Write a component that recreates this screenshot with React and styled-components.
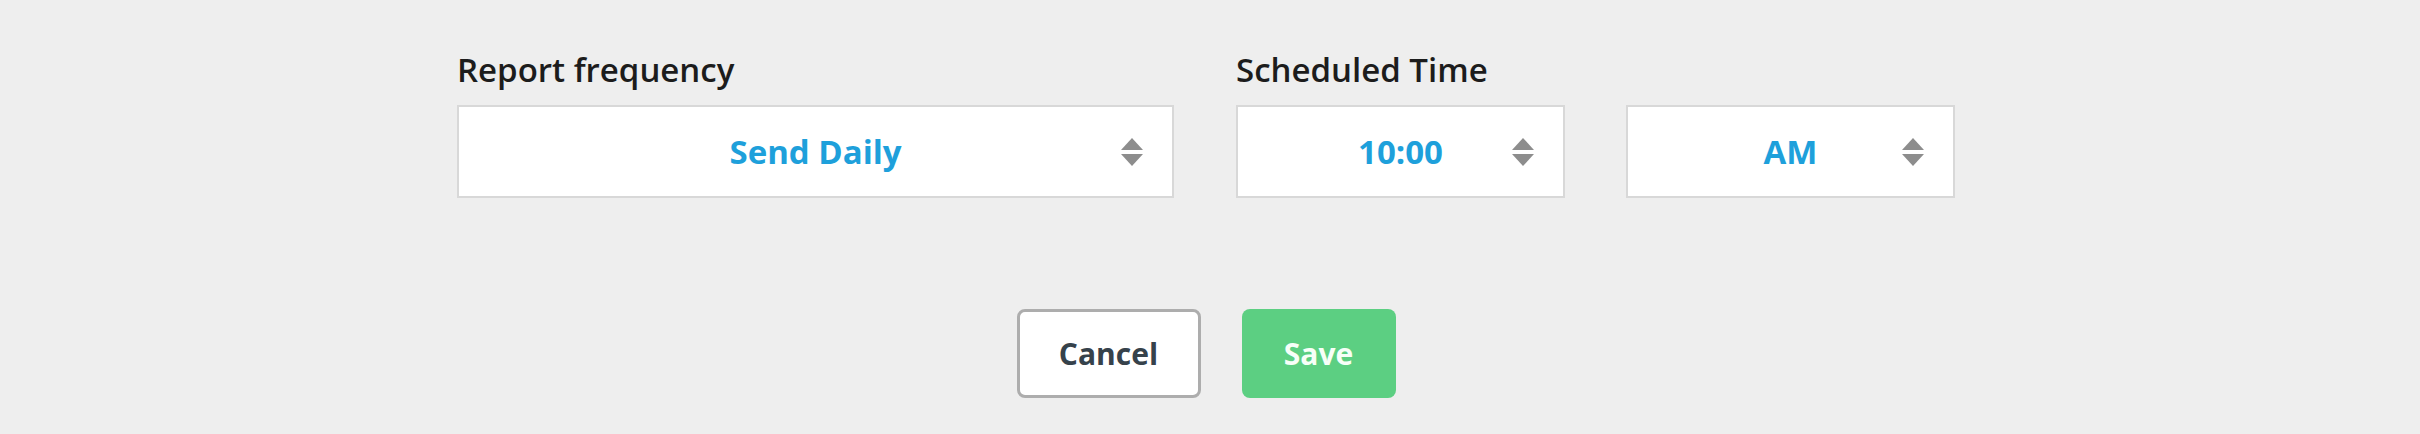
import styled, { createGlobalStyle } from 'styled-components';

const GlobalStyle = createGlobalStyle`
  html, body {
    margin: 0;
    padding: 0;
    background: #eeeeee;
    font-family: "Open Sans", Lato, "Liberation Sans", sans-serif;
  }
`;

const Page = styled.div`
  display: flex;
  justify-content: center;
  padding: 52px 8px 0 0;
  height: 434px;
  box-sizing: border-box;
`;

const Form = styled.div`
  width: 1498px;
  display: flex;
  flex-direction: column;
`;

const FieldsRow = styled.div`
  display: flex;
  gap: 62px;
`;

const Field = styled.div`
  display: flex;
  flex-direction: column;
`;

const Label = styled.div`
  font-size: 33px;
  line-height: 36px;
  font-weight: 600;
  color: #1c1c1c;
  margin-bottom: 17px;
`;

const Controls = styled.div`
  display: flex;
  gap: 61px;
`;

const Select = styled.div`
  width: ${({ $width }) => $width}px;
  height: 93px;
  box-sizing: border-box;
  background: #fff;
  border: 2px solid #d8d8d8;
  display: grid;
  grid-template-columns: 1fr auto 1fr;
  align-items: center;
  cursor: pointer;
`;

const Value = styled.span`
  grid-column: 2;
  font-size: 33px;
  font-weight: 700;
  color: #1ea0db;
`;

const Arrows = styled.span`
  grid-column: 3;
  justify-self: end;
  margin-right: 29px;
  display: flex;
  flex-direction: column;
  gap: 4px;
`;

const Triangle = styled.span`
  width: 0;
  height: 0;
  border-left: 11px solid transparent;
  border-right: 11px solid transparent;
  ${({ $down }) =>
    $down ? 'border-top: 12px solid #8d8d8d;' : 'border-bottom: 12px solid #8d8d8d;'}
`;

const Actions = styled.div`
  display: flex;
  justify-content: center;
  gap: 41px;
  margin-top: 111px;
`;

const Button = styled.button`
  height: 89px;
  box-sizing: border-box;
  border-radius: 8px;
  font-family: inherit;
  font-size: 30px;
  font-weight: 700;
  cursor: pointer;
`;

const CancelButton = styled(Button)`
  width: 184px;
  background: #fff;
  border: 3px solid #adadad;
  color: #36424b;
`;

const SaveButton = styled(Button)`
  width: 154px;
  background: #5ccf82;
  border: none;
  color: #f7fff8;
`;

const Dropdown = ({ width, value }) => (
  <Select $width={width}>
    <Value>{value}</Value>
    <Arrows>
      <Triangle />
      <Triangle $down />
    </Arrows>
  </Select>
);

export default function App() {
  return (
    <>
      <GlobalStyle />
      <Page>
        <Form>
          <FieldsRow>
            <Field>
              <Label>Report frequency</Label>
              <Dropdown width={717} value="Send Daily" />
            </Field>
            <Field>
              <Label>Scheduled Time</Label>
              <Controls>
                <Dropdown width={329} value="10:00" />
                <Dropdown width={329} value="AM" />
              </Controls>
            </Field>
          </FieldsRow>
          <Actions>
            <CancelButton>Cancel</CancelButton>
            <SaveButton>Save</SaveButton>
          </Actions>
        </Form>
      </Page>
    </>
  );
}
